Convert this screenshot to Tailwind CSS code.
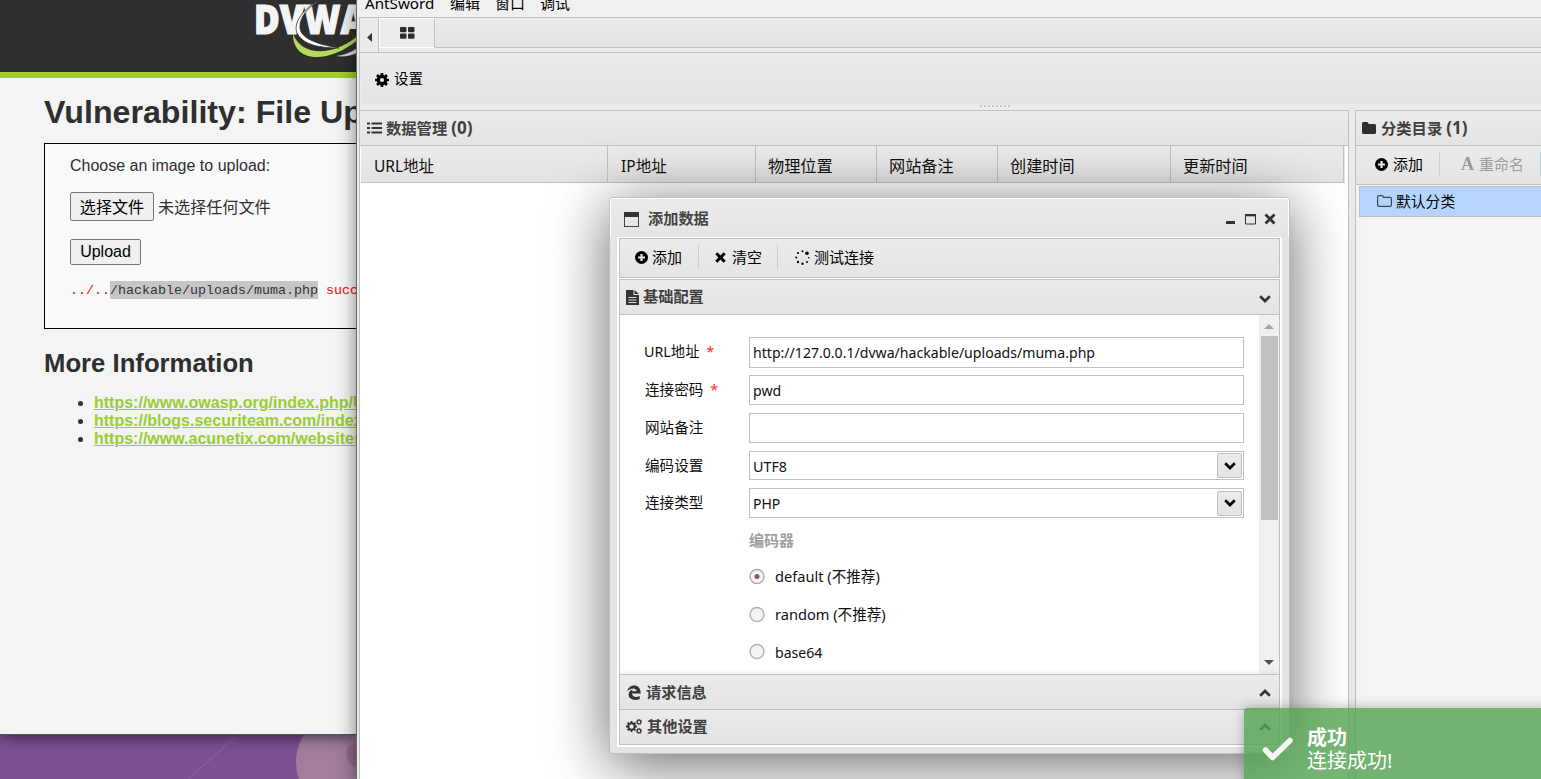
<!DOCTYPE html>
<html lang="zh-CN">
<head>
    <meta charset="UTF-8">
    <meta name="viewport" content="width=device-width, initial-scale=1.0">
    <title>AntSword</title>
    <!-- Tailwind CSS CDN -->
    <script src="https://cdn.jsdelivr.net/npm/@tailwindcss/browser@4"></script>
</head>
<body class="relative h-[779px] w-[1541px] overflow-hidden bg-[#7d5091] font-['Noto_Sans','Noto_Sans_CJK_SC',sans-serif] text-[15px] text-[#111]">
    <!-- Desktop wallpaper -->
    <svg class="absolute left-0 top-[735px]" width="357" height="44" viewBox="0 0 357 44">
        <path d="M188 44L238 0" stroke="#8a5c9a" stroke-width="1.500"/>
        <circle cx="347" cy="27" r="51" fill="#a17e9c"/>
        <path d="M349 10q-8 14 8 24V10z" fill="#94698f"/>
    </svg>

    <!-- Browser window: DVWA -->
    <div class="absolute left-0 top-0 h-[735px] w-[357px] overflow-hidden border-b border-[#55505a] bg-[#f4f4f4] font-['Liberation_Sans','Noto_Sans_CJK_SC',sans-serif] text-[#2f2f2f] shadow-[0_2px_14px_rgba(0,0,0,0.6)]">
        <header class="h-[78px] border-b-6 border-[#a2cd34] bg-[#2f2f2f]">
            <svg class="ml-[250px]" width="110" height="72" viewBox="0 0 110 72">
                <path d="M43 34C43 65 82 63 110 38V34C84 57 52 57 43 34z" fill="#b4dc5a"/>
                <path d="M86 56Q99 55 110 46V51Q99 58 86 56z" fill="#ddd"/>
                <text x="4" y="34" font-family="Open Sans" font-weight="800" font-size="40" textLength="112" lengthAdjust="spacingAndGlyphs" fill="#f5f5f5" stroke="#f5f5f5" stroke-width="1.200">DVWA</text>
                <path d="M73-2C52 8 43 24 47 33C52 43 65 48 89 48C66 44 49 38 50 26C50 16 59 6 73-2z" fill="#fff" stroke="#2f2f2f" stroke-width=".8"/>
            </svg>
        </header>
        <main class="w-[600px] pl-[44px]">
            <h1 class="pt-[14px] text-[32.200px] leading-[40px] font-bold">Vulnerability: File Upload</h1>
            <section class="mt-[11px] h-[186px] border border-black bg-[#f8fafa] pl-[25px]">
                <p class="pt-[12px] text-[16px] leading-[20px]">Choose an image to upload:</p>
                <div class="mt-[16px] flex items-center gap-[4px] text-[16.100px]">
                    <button class="h-[29px] w-[84px] rounded-[2px] border border-[#767676] bg-[#efefef] pt-[1px] text-black">选择文件</button>
                    <span class="pt-[2px]">未选择任何文件</span>
                </div>
                <button class="mt-[18px] block h-[26px] w-[71px] rounded-[2px] border border-[#767676] bg-[#efefef] text-[16px] leading-[22px] text-black">Upload</button>
                <pre class="mt-[16px] flex font-['Liberation_Mono',monospace] text-[13.330px] leading-[20px] text-[#f00]"><span>../..</span><span class="h-[18px] bg-[#c5c7c7] text-[#333]">/hackable/uploads/muma.php</span><span> succesfully uploaded!</span></pre>
            </section>
            <h2 class="mt-[19px] text-[25.700px] leading-[30px] font-bold">More Information</h2>
            <ul class="mt-[16px] list-disc pl-[50px] text-[16px] leading-[18px] font-bold">
                <li><a class="text-[#9acd32] underline">https://www.owasp.org/index.php/Unrestricted_File_Upload</a></li>
                <li><a class="text-[#9acd32] underline">https://blogs.securiteam.com/index.php/archives/1268</a></li>
                <li><a class="text-[#9acd32] underline">https://www.acunetix.com/websitesecurity/upload-forms-threat/</a></li>
            </ul>
        </main>
    </div>

    <!-- AntSword window -->
    <div class="absolute left-[356px] top-[-2px] flex h-[790px] w-[1200px] flex-col border-l border-[#68686b] bg-[#ebebeb] shadow-[0_0_18px_rgba(0,0,0,0.5)]">
        <nav class="flex h-[19px] shrink-0 items-end gap-[15px] bg-[#f0f0f0] pl-[8px] text-[15px] leading-[24px] text-black">
            <span class="mb-[2px] w-[70px] text-[15.200px]">AntSword</span><span class="mb-[2px]">编辑</span><span class="mb-[2px]">窗口</span><span class="mb-[2px]">调试</span>
        </nav>
        <div class="ml-[2px] flex min-h-0 grow flex-col border-t border-l border-[#c0c0c0]">
            <!-- Tab bar -->
            <div class="flex h-[35px] shrink-0 border-b border-[#c0c0c0] bg-[#ebebeb]">
                <div class="flex w-[19px] items-center justify-center border-r border-[#c0c0c0] pt-[5px]">
                    <svg width="5" height="9" viewBox="0 0 5 9"><path d="M5 0v9L0 4.500z" fill="#333"/></svg>
                </div>
                <div class="flex h-[30px] w-[56px] items-center justify-center border border-r-[#c0c0c0] border-t-white border-l-white border-b-white bg-[#ececec]">
                    <svg width="15" height="12" viewBox="0 0 15 12" fill="#2b2b2b"><rect width="6.500" height="5.300" rx="1"/><rect x="8" width="6.500" height="5.300" rx="1"/><rect y="6.500" width="6.500" height="5.300" rx="1"/><rect x="8" y="6.500" width="6.500" height="5.300" rx="1"/></svg>
                </div>
                <div class="h-[30px] grow border-b border-[#c0c0c0] bg-linear-to-b from-[#ebebeb] to-[#e4e4e4]"></div>
            </div>
            <!-- Main toolbar -->
            <div class="ml-px flex h-[51px] shrink-0 items-center gap-[5px] bg-linear-to-b from-[#ebebeb] to-[#e4e4e4] pl-[14px] text-[14.500px] text-black">
                <svg class="mt-[2px]" width="14" height="14" viewBox="0 0 14 14"><circle cx="7" cy="7" r="3.700" fill="none" stroke="#000" stroke-width="3.200"/><path d="M7 0v2.500M7 11.500V14M0 7h2.500M11.500 7H14M2 2l2 2M10 10l2 2M12 2l-2 2M4 10l-2 2" stroke="#000" stroke-width="2.700"/></svg>
                <span>设置</span>
            </div>
            <div class="h-[6px] shrink-0 pt-[1px] pl-[620px]">
                <div class="h-[2px] w-[30px] border-t-2 border-dotted border-[#c4c4c4]"></div>
            </div>
            <div class="flex min-h-0 grow">
                <!-- Shell list -->
                <section class="flex w-[989px] shrink-0 flex-col border-t border-r border-[#c0c0c0] bg-white">
                    <div class="flex h-[35px] shrink-0 items-center border-b border-[#c0c0c0] bg-linear-to-b from-[#ebebeb] to-[#e4e4e4] pl-[7px] text-[15.300px] font-bold text-[#404040]">
                        <svg class="mr-[4px]" width="15" height="12" viewBox="0 0 15 12"><path d="M0 1.500h3M0 6h3M0 10.500h3M4.500 1.500H15M4.500 6H15M4.500 10.500H15" stroke="#333" stroke-width="2.200"/></svg>
                        数据管理&nbsp;<span class="text-[17px]">(0)</span>
                    </div>
                    <div class="mr-[3px] ml-px flex h-[37px] shrink-0 border-b border-[#c0c0c0] bg-linear-to-b from-[#ebebeb] to-[#e3e3e3] text-[16.200px] leading-[40px]">
                        <div class="w-[247px] border-r border-[#c0c0c0] pl-[13px] text-[15.500px]">URL地址</div>
                        <div class="w-[148px] border-r border-[#c0c0c0] pl-[13px] text-[15.500px]">IP地址</div>
                        <div class="w-[121px] border-r border-[#c0c0c0] pl-[12px]">物理位置</div>
                        <div class="w-[121px] border-r border-[#c0c0c0] pl-[12px]">网站备注</div>
                        <div class="w-[173px] border-r border-[#c0c0c0] pl-[12px]">创建时间</div>
                        <div class="w-[173px] border-r border-[#c0c0c0] pl-[12px]">更新时间</div>
                    </div>
                </section>
                <!-- Category tree -->
                <section class="ml-[6px] flex grow flex-col border-t border-l border-[#c0c0c0] bg-[#f4f4f4]">
                    <div class="flex h-[35px] shrink-0 items-center border-b border-[#c0c0c0] bg-linear-to-b from-[#ebebeb] to-[#e4e4e4] pl-[6px] text-[15.300px] font-bold text-[#404040]">
                        <svg class="mr-[5px]" width="14" height="12" viewBox="0 0 14 12"><path d="M0 1.500Q0 0 1.500 0H5Q6.500 0 6.500 2H12.500Q14 2 14 3.500V10.500Q14 12 12.500 12H1.500Q0 12 0 10.500z" fill="#2e2e2e"/></svg>
                        分类目录&nbsp;<span class="text-[17px]">(1)</span>
                    </div>
                    <div class="flex h-[39px] shrink-0 items-center border-b border-[#c0c0c0] bg-linear-to-b from-[#ebebeb] to-[#e4e4e4] pb-[2px] pl-[19px] text-[15px] text-black">
                        <svg class="mr-[5px]" width="13" height="13" viewBox="0 0 13 13"><circle cx="6.500" cy="6.500" r="6.500"/><path d="M6.500 3v7M3 6.500h7" stroke="#e8e8e8" stroke-width="2.200"/></svg>
                        <span class="w-[46px]">添加</span>
                        <span class="h-[24px] w-[22px] border-l border-[#c3d0d6]"></span>
                        <span class="w-[18px] font-['Liberation_Serif',serif] text-[18px] font-bold text-[#999]">A</span>
                        <span class="w-[61px] text-[#9c9c9c]">重命名</span>
                        <span class="h-[24px] border-l border-[#b3d0d3]"></span>
                    </div>
                    <div class="mt-[1px] ml-[3px] flex h-[31px] shrink-0 items-center border border-[#c0c0c0] bg-[#b5d5ff] pb-[1px] pl-[17px] text-[14.800px] text-black">
                        <svg class="mr-[4px]" width="15" height="12" viewBox="0 0 15 12"><path d="M.6 2Q.6.6 2 .6H5Q6.300.6 6.300 2.300H13Q14.400 2.300 14.400 3.700V10Q14.400 11.400 13 11.400H2Q.6 11.400.6 10z" fill="none" stroke="#3c4654" stroke-width="1.200"/></svg>
                        默认分类
                    </div>
                </section>
            </div>
        </div>
    </div>

    <!-- Dialog: add data -->
    <div class="absolute left-[609px] top-[197px] flex h-[557px] w-[681px] flex-col rounded-[4px] border border-[#c0c0c0] bg-[#e4e4e4] px-[7px] pb-[6px] shadow-[0_10px_60px_rgba(0,0,0,0.6)]">
        <div class="-mx-[7px] flex h-[39px] shrink-0 items-center rounded-t-[3px] border border-b-0 border-white bg-linear-to-b from-[#ebebeb] to-[#e4e4e4] pt-[2px] pr-[12px] pl-[13px] text-[15.200px] font-bold text-[#444]">
            <svg class="mr-[9px]" width="15" height="15" viewBox="0 0 15 15"><rect x=".5" y=".5" width="14" height="14" fill="none" stroke="#444"/><rect width="15" height="5" fill="#333"/></svg>
            <span class="grow pb-[2px]">添加数据</span>
            <svg width="50" height="12" viewBox="0 0 50 12"><rect y="8" width="9" height="3" rx=".5" fill="#333"/><path d="M19.500 3v8h10V3" fill="none" stroke="#333"/><rect x="19" y="1" width="11" height="2.300" fill="#333"/><path d="M39.500 1.500l9 9M48.500 1.500l-9 9" stroke="#333" stroke-width="2.800"/></svg>
        </div>
        <div class="flex min-h-0 grow flex-col bg-white px-[2px] pt-[1px] pb-[2px]">
            <div class="flex h-[40px] shrink-0 items-center border border-[#c0c0c0] bg-linear-to-b from-[#ebebeb] to-[#e4e4e4] pb-[2px] pl-[15px] text-[15px] text-black">
                <svg class="mr-[4px]" width="13" height="13" viewBox="0 0 13 13"><circle cx="6.500" cy="6.500" r="6.500"/><path d="M6.500 3v7M3 6.500h7" stroke="#e8e8e8" stroke-width="2.200"/></svg>
                <span class="w-[46px]">添加</span>
                <span class="h-[24px] w-[17px] border-l border-[#c3d0d6]"></span>
                <svg class="mr-[6px]" width="11" height="11" viewBox="0 0 11 11"><path d="M1.300 1.300l8.400 8.400M9.700 1.300L1.300 9.700" stroke="#000" stroke-width="3"/></svg>
                <span class="w-[45px]">清空</span>
                <span class="h-[24px] w-[18px] border-l border-[#c3d0d6]"></span>
                <svg class="mr-[4px]" width="15" height="15" viewBox="0 0 15 15"><circle cx="7.500" cy="1.300" r="1"/><circle cx="12" cy="3.300" r="1.800"/><circle cx="13.700" cy="7.800" r=".8"/><circle cx="12" cy="12" r="1"/><circle cx="7.500" cy="13.700" r="1.200"/><circle cx="3" cy="12" r="1.200"/><circle cx="1.200" cy="7.500" r="1"/><circle cx="3" cy="3" r="1.100"/></svg>
                <span>测试连接</span>
            </div>
            <div class="mt-[1px] flex min-h-0 grow flex-col border border-[#c0c0c0]">
                <div class="flex h-[35px] shrink-0 items-center border-b border-[#c0c0c0] bg-linear-to-b from-[#ebebeb] to-[#e4e4e4] pr-[8px] pl-[6px] text-[15.200px] font-bold text-[#404040]">
                    <svg class="mr-[4px]" width="13" height="15" viewBox="0 0 13 15"><path d="M0 0h7.500v5H13v10H0z" fill="#333"/><path d="M8.500 0L13 4H8.500z" fill="#333"/><path d="M2.500 7.500h8M2.500 10h8M2.500 12.500h8" stroke="#ddd"/></svg>
                    <span class="grow pb-[2px]">基础配置</span>
                    <svg class="mt-[3px]" width="12" height="8" viewBox="0 0 12 8"><path d="M1.200 1.300L6 6l4.800-4.700" fill="none" stroke="#333" stroke-width="2.700"/></svg>
                </div>
                <div class="flex min-h-0 grow">
                    <form class="w-[639px] shrink-0 pt-[22px] pl-[25px] text-[14.600px]">
                        <div class="mb-[7px] flex h-[31px]">
                            <label class="w-[104px] leading-[29px]"><span class="-ml-[1px] text-[14.300px]">URL地址</span> <span class="ml-[3px] text-red-500">*</span></label>
                            <div class="w-[495px] border border-[#c0c0c0] pl-[3px] text-[14.100px] leading-[29px]">http://127.0.0.1/dvwa/hackable/uploads/muma.php</div>
                        </div>
                        <div class="mb-[8px] flex h-[30px]">
                            <label class="w-[104px] leading-[29px]">连接密码 <span class="ml-[3px] text-red-500">*</span></label>
                            <div class="w-[495px] border border-[#c0c0c0] pl-[3px] text-[14.100px] leading-[29px]">pwd</div>
                        </div>
                        <div class="mb-[8px] flex h-[30px]">
                            <label class="w-[104px] leading-[29px]">网站备注</label>
                            <div class="w-[495px] border border-[#c0c0c0]"></div>
                        </div>
                        <div class="mb-[8px] flex h-[29px]">
                            <label class="w-[104px] leading-[29px]">编码设置</label>
                            <div class="flex w-[495px] items-center justify-between border border-[#c0c0c0] pr-[1px] pl-[3px]"><span class="pt-[2px] text-[14.300px]">UTF8</span>
                                <span class="flex h-[25px] w-[25px] items-center justify-center rounded-[2px] border border-[#c0c0c0] bg-linear-to-b from-[#ebebeb] to-[#e4e4e4]"><svg width="12" height="8" viewBox="0 0 12 8"><path d="M1.200 1.300L6 6l4.800-4.700" fill="none" stroke="#000" stroke-width="2.700"/></svg></span>
                            </div>
                        </div>
                        <div class="mb-[8px] flex h-[30px]">
                            <label class="w-[104px] leading-[29px]">连接类型</label>
                            <div class="flex w-[495px] items-center justify-between border border-[#c0c0c0] pr-[1px] pl-[3px]"><span class="text-[14px]">PHP</span>
                                <span class="flex h-[25px] w-[25px] items-center justify-center rounded-[2px] border border-[#c0c0c0] bg-linear-to-b from-[#ebebeb] to-[#e4e4e4]"><svg width="12" height="8" viewBox="0 0 12 8"><path d="M1.200 1.300L6 6l4.800-4.700" fill="none" stroke="#000" stroke-width="2.700"/></svg></span>
                            </div>
                        </div>
                        <div class="pl-[104px]">
                            <div class="h-[32px] text-[15px] leading-[28px] font-bold text-[#a0a0a0]">编码器</div>
                            <div class="flex h-[38px] items-center gap-[9px]">
                                <svg class="mb-[2px]" width="17" height="17" viewBox="0 0 17 17"><circle cx="8" cy="8.500" r="7" fill="#f3f3f3" stroke="#aaa9ad" stroke-width="1.400"/><circle cx="8" cy="8.500" r="2.500" fill="#8a5b5b"/></svg>default (不推荐)
                            </div>
                            <div class="flex h-[38px] items-center gap-[9px]">
                                <svg class="mb-[2px]" width="17" height="17" viewBox="0 0 17 17"><circle cx="8" cy="8.500" r="7" fill="#f3f3f3" stroke="#b3aeb3" stroke-width="1.400"/></svg>random (不推荐)
                            </div>
                            <div class="flex h-[37px] items-center gap-[9px] text-[14.100px]">
                                <svg class="mb-[2px]" width="17" height="17" viewBox="0 0 17 17"><circle cx="8" cy="8.500" r="7" fill="#f3f3f3" stroke="#b3aeb3" stroke-width="1.400"/></svg>base64
                            </div>
                        </div>
                    </form>
                    <div class="flex grow flex-col items-center bg-[#f0f0f0]">
                        <svg class="mt-[9px] mb-[7px]" width="10" height="5" viewBox="0 0 10 5"><path d="M5 0l5 5H0z" fill="#a3a3a3"/></svg>
                        <div class="h-[184px] w-[17px] bg-[#c1c1c1]"></div>
                        <svg class="mt-auto mb-[9px]" width="10" height="5" viewBox="0 0 10 5"><path d="M0 0h10L5 5z" fill="#505050"/></svg>
                    </div>
                </div>
                <div class="flex h-[35px] shrink-0 items-center border-t border-[#c0c0c0] bg-linear-to-b from-[#ebebeb] to-[#e4e4e4] pr-[8px] pl-[7px] text-[15.200px] font-bold text-[#404040] shadow-[0_-2px_3px_rgba(0,0,0,0.06)]">
                    <svg class="mr-[5px]" width="14" height="15" viewBox="0 0 14 15"><path d="M.3 6C2-1.500 14-2 13.700 8.500H5C5.500 12.500 10 12.500 12.700 11V14C8 16 1.500 15 1.600 9.500C1.700 7 3.500 5.200 5.600 4.500L5 6.300H9.500C9.500 2.500 4 2.500.3 6z" fill="#333"/></svg>
                    <span class="grow">请求信息</span>
                    <svg class="mt-[1px]" width="12" height="8" viewBox="0 0 12 8"><path d="M1.200 6.700L6 2l4.800 4.700" fill="none" stroke="#333" stroke-width="2.700"/></svg>
                </div>
                <div class="flex h-[35px] shrink-0 items-center border-t border-[#c0c0c0] bg-linear-to-b from-[#ebebeb] to-[#e4e4e4] pr-[8px] pb-[1px] pl-[6px] text-[15.200px] font-bold text-[#404040]">
                    <svg class="mr-[5px]" width="16" height="15" viewBox="0 0 16 15" fill="none" stroke="#333"><circle cx="5.500" cy="7.500" r="3.200" stroke-width="2"/><path d="M5.500 2v2M5.500 11v2M0 7.500h2M9 7.500h2M1.600 3.600L3 5M8 10l1.400 1.400M9.400 3.600L8 5M3 10l-1.400 1.400" stroke-width="1.800"/><circle cx="13" cy="3" r="1.800" stroke-width="1.200"/><circle cx="13" cy="12" r="1.800" stroke-width="1.200"/><circle cx="13" cy="3" r="2.700" stroke-dasharray="1.100 1"/><circle cx="13" cy="12" r="2.700" stroke-dasharray="1.100 1"/></svg>
                    <span class="grow pb-[1px]">其他设置</span>
                    <svg width="12" height="8" viewBox="0 0 12 8"><path d="M1.200 6.700L6 2l4.800 4.700" fill="none" stroke="#333" stroke-width="2.700"/></svg>
                </div>
            </div>
        </div>
    </div>

    <!-- Success toast -->
    <div class="absolute left-[1244px] top-[708px] flex h-[90px] w-[310px] rounded-[3px] bg-[#51a351]/80 pl-[18px] text-[20px] leading-[23px] text-white shadow-[0_0_12px_rgba(0,0,0,0.3)]">
        <svg class="mt-[29px] mr-[13px]" width="32" height="24" viewBox="0 0 32 24"><path d="M3.500 13l7 7.500L28 3.500" fill="none" stroke="#f7f7f7" stroke-width="5.500" stroke-linecap="round" stroke-linejoin="round"/></svg>
        <div class="pt-[18px]">
            <div class="font-bold">成功</div>
            <div>连接成功!</div>
        </div>
    </div>
</body>
</html>
